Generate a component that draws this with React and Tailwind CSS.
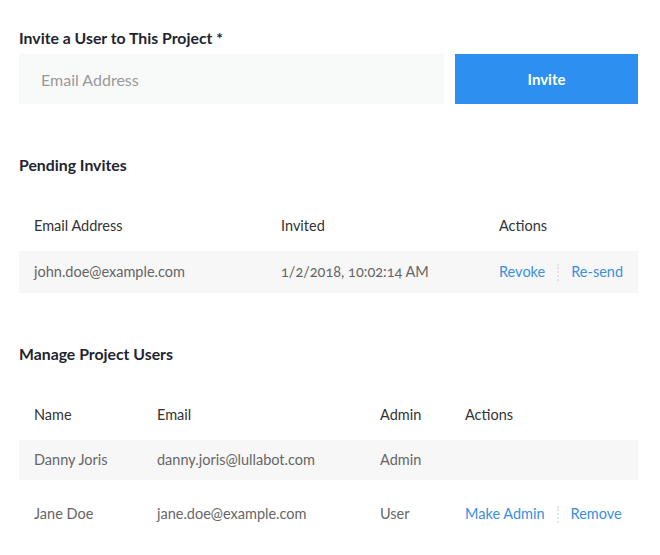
import React from 'react';

const font = { fontFamily: 'Lato, "Open Sans", sans-serif' };

function Sep() {
    return <span className="mx-[12px] inline-block h-[17px] border-l-2 border-dotted border-[#e3e3e3]" />;
}

function Link({ children }) {
    return <a href="#" className="text-[#3b8fe0]">{children}</a>;
}

export default function App() {
    const invites = [
        { email: 'john.doe@example.com', invited: '1/2/2018, 10:02:14 AM' },
    ];
    const users = [
        { name: 'Danny Joris', email: 'danny.joris@lullabot.com', role: 'Admin', actions: false },
        { name: 'Jane Doe', email: 'jane.doe@example.com', role: 'User', actions: true },
    ];

    return (
        <div className="w-[660px] bg-white pt-[28px] pl-[19px] pr-[22px] pb-4 oldstyle-nums" style={font}>
            {/* invite form */}
            <h2 className="text-[15.8px] leading-[20px] font-bold text-[#1e2530]">Invite a User to This Project *</h2>
            <div className="mt-[6px] flex gap-[11px]">
                <input
                    className="h-[50px] w-[425px] bg-[#f8f9f9] pl-[22px] text-[16px] text-[#555] placeholder-[#9a9a9a] outline-none"
                    placeholder="Email Address"
                />
                <button className="h-[50px] flex-1 bg-[#2d8ff0] text-[15px] font-bold text-white">Invite</button>
            </div>

            {/* pending invites */}
            <h2 className="mt-[51px] text-[15.8px] leading-[20px] font-bold text-[#1e2530]">Pending Invites</h2>
            <div className="mt-[34px] text-[14.5px]">
                <div className="flex h-[42px] items-center pb-2 pl-[15px] text-[#333]">
                    <div className="w-[247px]">Email Address</div>
                    <div className="w-[218px]">Invited</div>
                    <div>Actions</div>
                </div>
                {invites.map((inv) => (
                    <div key={inv.email} className="flex h-[42px] items-center bg-[#f7f7f7] pl-[15px] text-[#666]">
                        <div className="w-[247px]">{inv.email}</div>
                        <div className="w-[218px]">{inv.invited}</div>
                        <div className="flex items-center">
                            <Link>Revoke</Link>
                            <Sep />
                            <Link>Re-send</Link>
                        </div>
                    </div>
                ))}
            </div>

            {/* project users */}
            <h2 className="mt-[51px] text-[15.8px] leading-[20px] font-bold text-[#1e2530]">Manage Project Users</h2>
            <div className="mt-[34px] text-[14.5px]">
                <div className="flex h-[42px] items-center pb-2 pl-[15px] text-[#333]">
                    <div className="w-[123px]">Name</div>
                    <div className="w-[223px]">Email</div>
                    <div className="w-[85px]">Admin</div>
                    <div>Actions</div>
                </div>
                {users.map((u, i) => (
                    <div
                        key={u.email}
                        className={i % 2 === 0
                            ? 'flex h-[40px] items-center bg-[#f7f7f7] pl-[15px] text-[#666]'
                            : 'flex h-[68px] items-center pl-[15px] text-[#666]'}
                    >
                        <div className="w-[123px]">{u.name}</div>
                        <div className="w-[223px]">{u.email}</div>
                        <div className="w-[85px]">{u.role}</div>
                        {u.actions && (
                            <div className="flex items-center">
                                <Link>Make Admin</Link>
                                <Sep />
                                <Link>Remove</Link>
                            </div>
                        )}
                    </div>
                ))}
            </div>
        </div>
    );
}
